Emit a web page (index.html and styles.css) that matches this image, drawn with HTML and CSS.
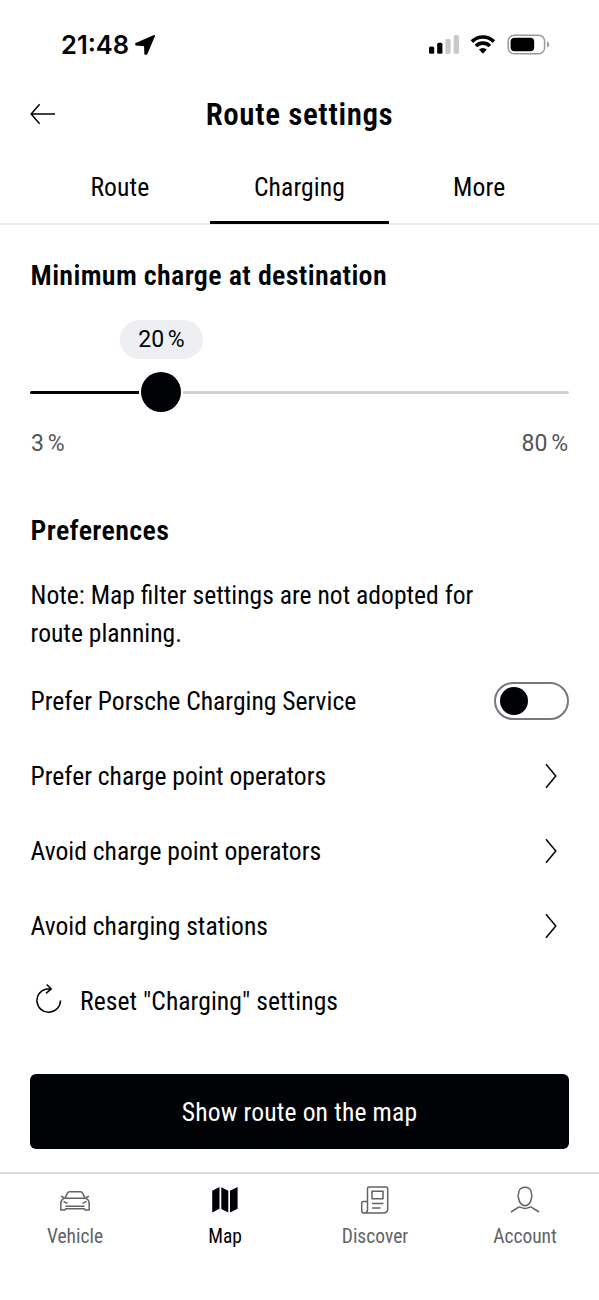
FILE: index.html
```
<!DOCTYPE html>
<html lang="en">
<head>
<meta charset="utf-8">
<title>Route settings</title>
<link rel="stylesheet" href="styles.css">
</head>
<body>
<div class="screen">
  <div class="status">
    <span class="clock">21:48</span>
    <svg class="locate" width="22" height="22" viewBox="0 0 22 22"><path d="M20.300 1.800 2 9.600v1.200l8.800.8.300 8.300h1.500Z"/></svg>
    <svg class="signals" width="122" height="24" viewBox="0 0 122 24">
      <rect x="0" y="13.500" width="5.200" height="7.300" rx="1.500"/>
      <rect x="8.200" y="9.800" width="5.200" height="11" rx="1.500"/>
      <rect class="faint" x="16.400" y="6" width="5.200" height="14.800" rx="1.500"/>
      <rect class="faint" x="24.700" y="2" width="5.200" height="18.800" rx="1.500"/>
      <g class="wifi"><path d="M42.900 8.600a15.500 15.500 0 0 1 22 0"/><path d="M46.900 13a10 10 0 0 1 14 0"/></g>
      <path d="M50 16.600a5.800 5.800 0 0 1 7.800 0l-3.200 3.500q-.7.700-1.400 0Z"/>
      <rect class="case" x="79.200" y="2.200" width="36.400" height="18.600" rx="6"/>
      <rect x="81.600" y="4.700" width="23.600" height="13.600" rx="4"/>
      <path class="cap" d="M118 8.300q2.200 1 2.200 3.200t-2.200 3.200Z"/>
    </svg>
  </div>

  <header class="header">
    <svg class="back" width="26" height="22" viewBox="0 0 26 22"><path d="M25 11H1.200M9.600 1.200 1.200 11l8.400 9.800"/></svg>
    <h1>Route settings</h1>
  </header>

  <nav class="tabs">
    <a class="tab">Route</a>
    <a class="tab active">Charging</a>
    <a class="tab">More</a>
  </nav>

  <main class="content">
    <h2>Minimum charge at destination</h2>
    <div class="slider">
      <span class="bubble percent">20 %</span>
      <div class="track"><span class="filled"></span><span class="thumb"></span><span class="rest"></span></div>
      <div class="range percent"><span>3 %</span><span>80 %</span></div>
    </div>

    <h2>Preferences</h2>
    <p class="note">Note: Map filter settings are not adopted for<br>route planning.</p>
    <div class="row"><span>Prefer Porsche Charging Service</span><span class="switch"><span class="knob"></span></span></div>
    <div class="row"><span>Prefer charge point operators</span><svg class="chevron" width="12" height="26" viewBox="0 0 12 26"><path d="M1 1.200 10.800 13 1 24.800"/></svg></div>
    <div class="row"><span>Avoid charge point operators</span><svg class="chevron" width="12" height="26" viewBox="0 0 12 26"><path d="M1 1.200 10.800 13 1 24.800"/></svg></div>
    <div class="row"><span>Avoid charging stations</span><svg class="chevron" width="12" height="26" viewBox="0 0 12 26"><path d="M1 1.200 10.800 13 1 24.800"/></svg></div>
    <div class="row reset">
      <svg class="line" width="28" height="34" viewBox="0 0 28 34"><path d="M25.500 16.500A11.800 11.800 0 1 1 11.500 4.900H16M11.700.5 16.200 4.900 11 9.400"/></svg>
      <span>Reset "Charging" settings</span>
    </div>
    <button class="primary">Show route on the map</button>
  </main>

  <nav class="bottom">
    <a class="item">
      <svg width="32" height="30" viewBox="0 0 32 30"><path d="M6.200 11.600 8.600 6.900Q9.200 5.800 10.500 5.700h11q1.300.1 1.900 1.200l2.400 4.700M4.500 12.200h23M5 12.100Q1.800 14 1.800 17.500V24h4l.8-1.200h18.800l.8 1.200h4v-6.500q0-3.500-3.200-5.400M2 10.300l2.800 1.200M30 10.300l-2.800 1.200M4.500 15.300 8.600 17.300M27.500 15.300 23.400 17.300M6.500 20.300h19"/></svg>
      <span>Vehicle</span>
    </a>
    <a class="item current">
      <svg width="32" height="30" viewBox="0 0 32 30"><path d="M3.200 4.800 10.500 1v21.800l-7.300 3.800ZM12.300 1.300l7 3.400v21.700l-7-3.400ZM21 4.800 28.600 1v21.800L21 26.600Z"/></svg>
      <span>Map</span>
    </a>
    <a class="item">
      <svg width="32" height="30" viewBox="0 0 32 30"><path d="M8.500 24V2.500Q8.500 1 10 1H27q1.700 0 1.700 1.700v19.800Q28.700 27 24.200 27H5.300Q2.700 27 2.700 24.400V17q0-1.500 1.500-1.500h4.300M8.500 24q0 3-3.200 3M13 5.200h11v7.500H13ZM13 17.500h11.500M13 22h8.500"/></svg>
      <span>Discover</span>
    </a>
    <a class="item">
      <svg width="32" height="30" viewBox="0 0 32 30"><path d="M16 1.200C11.500 1.200 9.400 4 9.500 8.200q-1 1-.1 3.300C10.200 16 12.300 19.700 16 19.700s5.800-3.700 6.600-8.200q.9-2.300-.1-3.300C22.600 4 20.500 1.200 16 1.200ZM2 26 9.300 21.300q1.400-.7 2.700.1 4 2 8 0 1.300-.8 2.700-.1L30 26"/></svg>
      <span>Account</span>
    </a>
  </nav>
</div>
</body>
</html>
```
FILE: styles.css
```
* { box-sizing: border-box; }
body { margin: 0; background: #fff; color: #010205; font-family: Roboto, sans-serif; font-stretch: 75%; font-size: 25.6px; }
h1, h2, p { margin: 0; }
svg { display: block; flex: none; }
.screen { width: 599px; height: 1300px; display: flex; flex-direction: column; overflow: hidden; }

.status { height: 75px; padding: 14px 48px 0 61px; display: flex; align-items: center; }
.clock { font-family: Inter, sans-serif; font-stretch: 100%; font-weight: 600; font-size: 25.5px; letter-spacing: 0; }
.locate { margin-left: 5px; stroke: #000; stroke-width: 1.500; stroke-linejoin: round; }
.signals { margin-left: auto; }
.faint { fill: #c8c8ca; }
.wifi { fill: none; stroke: #000; stroke-width: 3.700; }
.case { fill: none; stroke: #999; stroke-width: 1.500; }
.cap { fill: #999; }

.header { height: 78px; padding: 0 30px; display: grid; grid-template-columns: 26px 1fr 26px; align-items: center; }
.back, .chevron, .line { fill: none; stroke: #010205; stroke-width: 1.500; }
h1 { text-align: center; font-size: 31px; font-weight: 600; letter-spacing: .6px; }

.tabs { height: 72px; padding: 0 30px; display: grid; grid-template-columns: repeat(3, 1fr); border-bottom: 2px solid #ececee; }
.tab { display: flex; justify-content: center; align-items: center; height: 71px; padding-bottom: 3px; letter-spacing: .1px; }
.active { border-bottom: 3px solid #010205; padding-bottom: 0; }

.content { padding: 0 30px; display: flex; flex-direction: column; }
h2, .note, .row > span:first-child { padding-left: .6px; }
h2 { font-size: 28px; font-weight: 600; line-height: 34px; letter-spacing: .33px; margin-top: 34px; }
.slider { display: flex; flex-direction: column; height: 167px; margin-top: 27px; }
.percent { font-size: 23px; font-stretch: 100%; word-spacing: -2px; }
.bubble { width: 83px; height: 39px; margin-left: 90px; border-radius: 20px; background: #eeeff2; display: flex; align-items: center; justify-content: center; }
.track { display: flex; align-items: center; height: 40px; margin-top: 13px; }
.filled { width: 109px; height: 3px; background: #010205; border-radius: 2px 0 0 2px; }
.thumb { width: 40px; height: 40px; margin: 0 2px; border-radius: 50%; background: #010205; }
.rest { flex: 1; height: 3px; background: #d2d2d4; border-radius: 0 2px 2px 0; }
.range { display: flex; justify-content: space-between; margin-top: 18px; padding: 0 1px; line-height: 27px; color: #535457; }
.slider + h2 { margin-top: 27px; }
.note { margin-top: 28px; line-height: 38px; height: 87px; }
.row { height: 75px; display: flex; align-items: center; justify-content: space-between; }
.chevron { margin-right: 12px; }
.switch { width: 75px; height: 38px; padding: 0 4px; border: 2px solid #77787b; border-radius: 19px; display: flex; align-items: center; }
.knob { width: 28px; height: 28px; border-radius: 50%; background: #010205; }
.reset { justify-content: flex-start; gap: 17px; padding-left: 5px; letter-spacing: .06px; }
.primary { height: 75px; margin-top: 36px; border: 0; border-radius: 6px; background: #010205; color: #fff; font: inherit; letter-spacing: .15px; }

.bottom { margin-top: 23px; height: 128px; border-top: 2px solid #dedee0; display: grid; grid-template-columns: repeat(4, 150px); align-items: start; }
.item { padding-top: 12px; display: flex; flex-direction: column; align-items: center; font-size: 19.500px; line-height: 24px; color: #626366; gap: 9px; }
.item svg { fill: none; stroke: currentColor; stroke-width: 1.500; stroke-linejoin: round; }
.item.current { color: #010205; }
.current svg { fill: currentColor; stroke: none; }
```
